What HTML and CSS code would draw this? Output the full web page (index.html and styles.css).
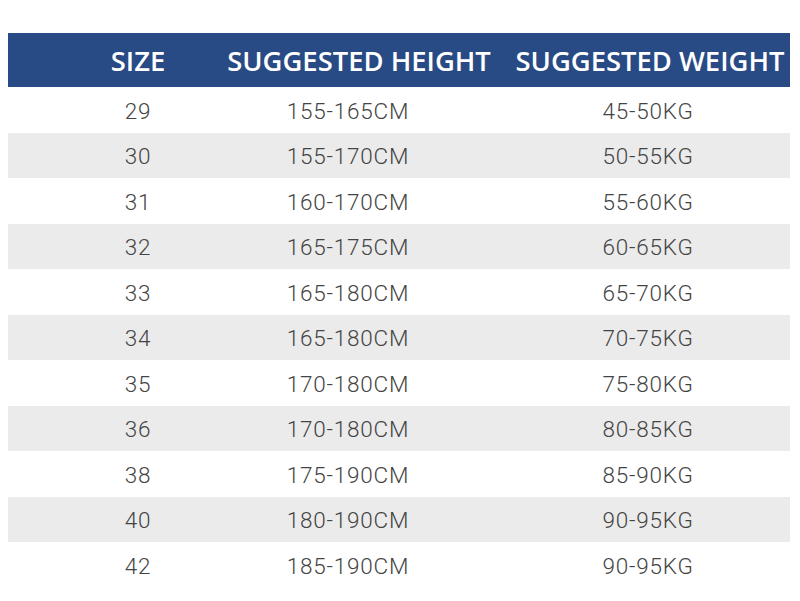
FILE: index.html
```html
<!DOCTYPE html>
<html>
<head>
<meta charset="utf-8">
<link rel="stylesheet" href="styles.css">
</head>
<body>
<div class="chart">
  <div class="row head">
    <div class="cell c1">SIZE</div>
    <div class="cell c2">SUGGESTED HEIGHT</div>
    <div class="cell c3">SUGGESTED WEIGHT</div>
  </div>
  <div class="row"><div class="cell c1">29</div><div class="cell c2">155-165CM</div><div class="cell c3">45-50KG</div></div>
  <div class="row alt"><div class="cell c1">30</div><div class="cell c2">155-170CM</div><div class="cell c3">50-55KG</div></div>
  <div class="row"><div class="cell c1">31</div><div class="cell c2">160-170CM</div><div class="cell c3">55-60KG</div></div>
  <div class="row alt"><div class="cell c1">32</div><div class="cell c2">165-175CM</div><div class="cell c3">60-65KG</div></div>
  <div class="row"><div class="cell c1">33</div><div class="cell c2">165-180CM</div><div class="cell c3">65-70KG</div></div>
  <div class="row alt"><div class="cell c1">34</div><div class="cell c2">165-180CM</div><div class="cell c3">70-75KG</div></div>
  <div class="row"><div class="cell c1">35</div><div class="cell c2">170-180CM</div><div class="cell c3">75-80KG</div></div>
  <div class="row alt"><div class="cell c1">36</div><div class="cell c2">170-180CM</div><div class="cell c3">80-85KG</div></div>
  <div class="row"><div class="cell c1">38</div><div class="cell c2">175-190CM</div><div class="cell c3">85-90KG</div></div>
  <div class="row alt"><div class="cell c1">40</div><div class="cell c2">180-190CM</div><div class="cell c3">90-95KG</div></div>
  <div class="row"><div class="cell c1">42</div><div class="cell c2">185-190CM</div><div class="cell c3">90-95KG</div></div>
</div>
</body>
</html>
```
FILE: styles.css
```css
html, body {
  margin: 0;
  padding: 0;
  background: #ffffff;
}
body {
  padding: 33px 10px 0 8px;
}
.chart {
  width: 782px;
}
.row {
  display: grid;
  grid-template-columns: 260px 170px 352px;
  height: 45.5px;
  align-items: center;
  font-family: "Roboto", sans-serif;
  font-weight: 300;
  font-size: 22.5px;
  letter-spacing: 0.8px;
  color: #444444;
}
.row.alt {
  background: #ebebeb;
}
.cell {
  display: flex;
  justify-content: center;
  white-space: nowrap;
  padding-top: 2px;
}
.row .c2 {
  padding-right: 10px;
}
.row .c3 {
  padding-left: 68px;
}
.row.head {
  height: 54px;
  background: #284a85;
  color: #ffffff;
  font-family: "Open Sans", sans-serif;
  font-weight: 600;
  font-size: 27.4px;
  letter-spacing: 0;
}
.row.head .cell {
  padding-top: 0;
}
.row.head .c2 {
  padding-right: 0;
  padding-left: 12px;
}
.row.head .c3 {
  padding-left: 72px;
}
```
